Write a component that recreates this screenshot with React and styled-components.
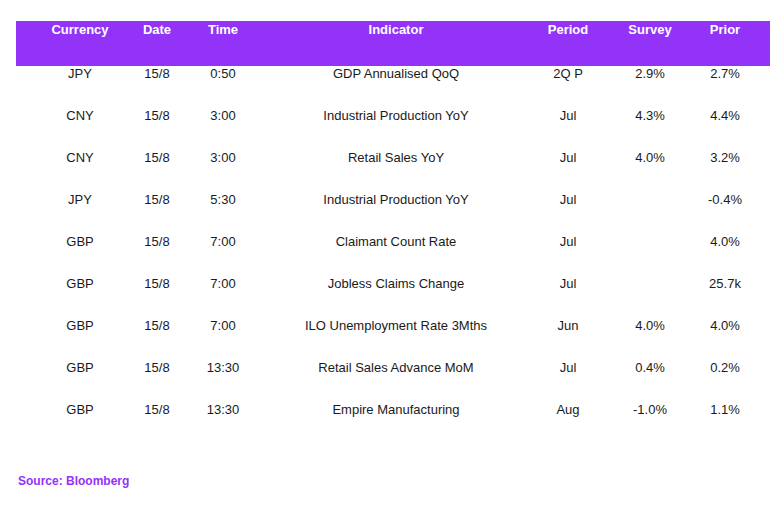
import React from "react";
import styled, { createGlobalStyle } from "styled-components";

const Global = createGlobalStyle`
  body { margin: 0; background: #fff; font-family: "Liberation Sans", Arial, sans-serif; }
`;

const cols = "128px 26px 106px 240px 104px 60px 90px";

const rows = [
  ["JPY", "15/8", "0:50", "GDP Annualised QoQ", "2Q P", "2.9%", "2.7%"],
  ["CNY", "15/8", "3:00", "Industrial Production YoY", "Jul", "4.3%", "4.4%"],
  ["CNY", "15/8", "3:00", "Retail Sales YoY", "Jul", "4.0%", "3.2%"],
  ["JPY", "15/8", "5:30", "Industrial Production YoY", "Jul", "", "-0.4%"],
  ["GBP", "15/8", "7:00", "Claimant Count Rate", "Jul", "", "4.0%"],
  ["GBP", "15/8", "7:00", "Jobless Claims Change", "Jul", "", "25.7k"],
  ["GBP", "15/8", "7:00", "ILO Unemployment Rate 3Mths", "Jun", "4.0%", "4.0%"],
  ["GBP", "15/8", "13:30", "Retail Sales Advance MoM", "Jul", "0.4%", "0.2%"],
  ["GBP", "15/8", "13:30", "Empire Manufacturing", "Aug", "-1.0%", "1.1%"],
];

const headers = ["Currency", "Date", "Time", "Indicator", "Period", "Survey", "Prior"];

export default function App() {
  return (
    <Page>
      <Global />
      <Header>
        {headers.map((h) => (
          <Cell key={h}>{h}</Cell>
        ))}
      </Header>
      {rows.map((r, i) => (
        <Row key={i}>
          {r.map((c, j) => (
            <Cell key={j}>{c}</Cell>
          ))}
        </Row>
      ))}
      <Source>Source: Bloomberg</Source>
    </Page>
  );
}

const Page = styled.div`
  width: 770px;
  height: 517px;
  padding: 21px 0 0 16px;
  box-sizing: border-box;
`;

const Header = styled.div`
  display: grid;
  grid-template-columns: ${cols};
  height: 45px;
  padding-top: 1px;
  box-sizing: border-box;
  background: #9333f8;
  color: #fff;
  font-weight: bold;
  font-size: 13px;
`;

const Row = styled.div`
  display: grid;
  grid-template-columns: ${cols};
  height: 42px;
  font-size: 13px;
  color: #1a1a1a;
`;

const Cell = styled.div`
  line-height: 16px;
  text-align: center;
  white-space: nowrap;
  display: flex;
  justify-content: center;
`;

const Source = styled.div`
  margin-top: 29px;
  margin-left: 2px;
  color: #9333f8;
  font-weight: bold;
  font-size: 12px;
  line-height: 16px;
`;
